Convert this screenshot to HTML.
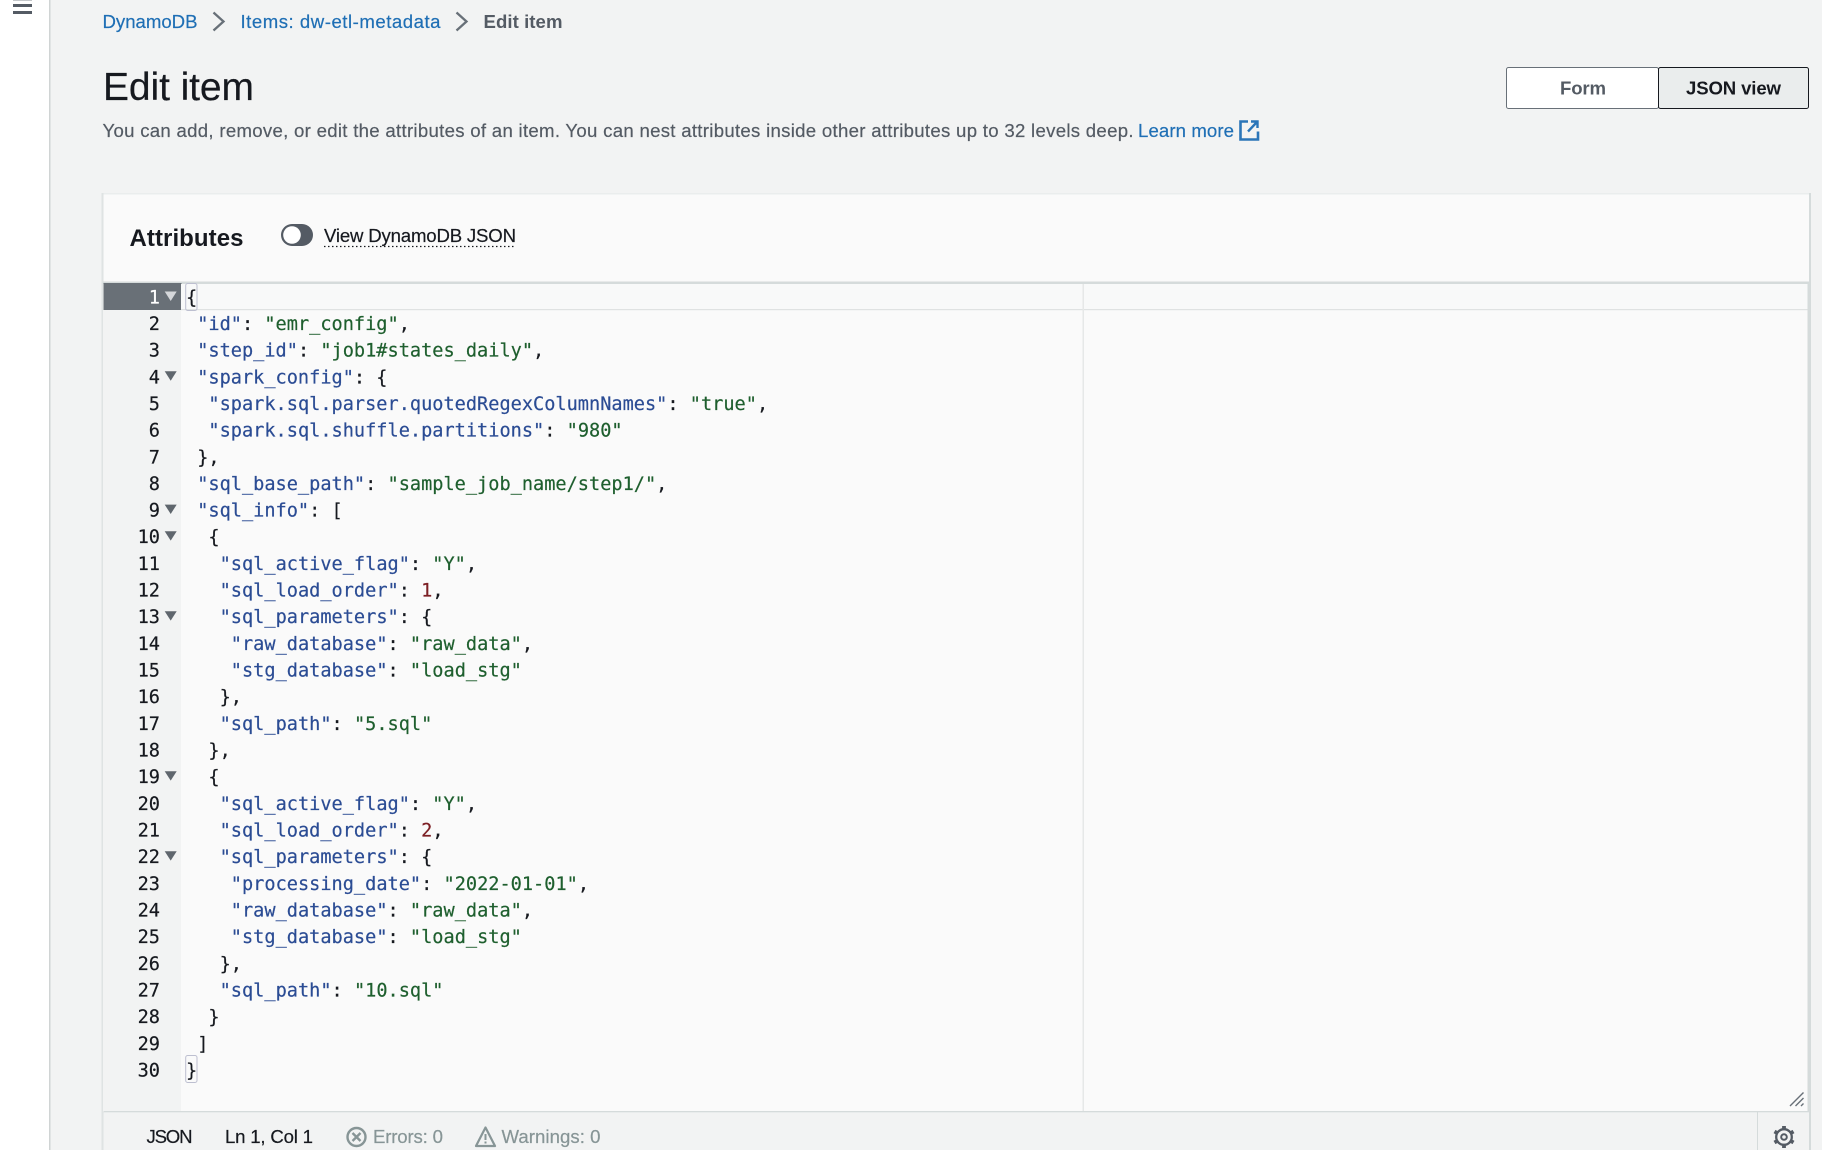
<!DOCTYPE html>
<html lang="en"><head><meta charset="utf-8"><title>Edit item</title>
<style>
html,body{margin:0;padding:0;background:#f2f3f3;width:1822px;height:1150px;overflow:hidden}
svg{display:block;position:absolute;left:0;top:0;filter:blur(.3px)}
text{font-family:"Liberation Sans",sans-serif;white-space:pre;stroke-width:.2px}
.c text{font-family:"DejaVu Sans Mono","Liberation Mono",monospace;font-size:18.6px;fill:#16191f;stroke:#16191f}
.g text{font-family:"DejaVu Sans Mono","Liberation Mono",monospace;font-size:18.6px;fill:#16191f;text-anchor:end;stroke:#16191f}
.c .k{fill:#2b4c94;stroke:#2b4c94}.c .s{fill:#1e5f2e;stroke:#1e5f2e}.c .n{fill:#7c1f24;stroke:#7c1f24}
</style></head><body>
<svg width="1822" height="1150" viewBox="0 0 1822 1150" xmlns="http://www.w3.org/2000/svg">
<rect width="1822" height="1150" fill="#f2f3f3"/>
<!-- sidebar -->
<rect x="0" y="0" width="49" height="1150" fill="#fff"/>
<rect x="49" y="0" width="1.5" height="1150" fill="#d0d4d4"/>
<rect x="13" y="0" width="19" height="1" fill="#c4c7ca"/>
<rect x="13" y="4" width="19" height="3" fill="#545b64"/>
<rect x="13" y="11" width="19" height="3" fill="#545b64"/>
<!-- breadcrumb -->
<text x="102.500" y="28" font-size="18.6" fill="#1f6fb5" stroke="#1f6fb5" textLength="95">DynamoDB</text>
<path d="M213.500 12.500 L223.500 21.500 L213.500 30.500" fill="none" stroke="#687078" stroke-width="2.300"/>
<text x="240.500" y="28" font-size="18.6" fill="#1f6fb5" stroke="#1f6fb5" textLength="200">Items: dw-etl-metadata</text>
<path d="M456.500 12.500 L466.500 21.500 L456.500 30.500" fill="none" stroke="#687078" stroke-width="2.300"/>
<text x="483.500" y="28" font-size="18.6" font-weight="bold" fill="#545b64" textLength="79">Edit item</text>
<!-- title -->
<text x="103" y="100" font-size="39" fill="#16191f" stroke="#16191f" textLength="151">Edit item</text>
<text x="102.500" y="137" font-size="18.6" fill="#545b64" stroke="#545b64" textLength="1031">You can add, remove, or edit the attributes of an item. You can nest attributes inside other attributes up to 32 levels deep.</text>
<text x="1138" y="137" font-size="18.6" fill="#1f6fb5" stroke="#1f6fb5" textLength="96">Learn more</text>
<path d="M1248 121.500 H1240.500 V139.500 H1258 V131.500" fill="none" stroke="#2a75b8" stroke-width="2.600"/>
<path d="M1248 131.500 L1256.500 122.500 M1251 121.500 H1257.500 V128" fill="none" stroke="#2a75b8" stroke-width="2.400"/>
<!-- segmented -->
<rect x="1506.500" y="67.500" width="152" height="41" fill="#fff" stroke="#687078" rx="2"/>
<rect x="1658.500" y="67.500" width="150" height="41" fill="#eaeded" stroke="#16191f" rx="2"/>
<text x="1560" y="94.500" font-size="18.6" font-weight="bold" fill="#545b64" textLength="46">Form</text>
<text x="1686" y="94.500" font-size="18.6" font-weight="bold" fill="#16191f" textLength="95">JSON view</text>
<!-- card -->
<rect x="102.500" y="193" width="1707.500" height="957" fill="#fafafa"/>
<rect x="102" y="193" width="1708" height="1.500" fill="#eaeded"/>
<rect x="101.500" y="193" width="2" height="957" fill="#dfe3e3"/>
<rect x="1809" y="193" width="2" height="957" fill="#d5dbdb"/>
<text x="129.500" y="246" font-size="24" font-weight="bold" fill="#16191f" textLength="114">Attributes</text>
<rect x="281" y="224" width="32" height="22" rx="11" fill="#545b64"/>
<circle cx="292" cy="235" r="8.800" fill="#fff"/>
<text x="324" y="242" font-size="18.6" fill="#16191f" stroke="#16191f" textLength="192">View DynamoDB JSON</text>
<line x1="324" y1="246.500" x2="516" y2="246.500" stroke="#16191f" stroke-width="1.200" stroke-dasharray="1.500 2.500"/>
<!-- editor -->
<rect x="103" y="281.500" width="1706" height="2.500" fill="#d5dbdb"/>
<rect x="103" y="284" width="78" height="828" fill="#f2f3f3"/>
<rect x="103.500" y="283" width="78" height="27" fill="#697077"/>
<rect x="181" y="284" width="1627" height="26" fill="#f8f9f9"/>
<rect x="181" y="309" width="1627" height="1.200" fill="#dfe2e2"/>
<rect x="1082.500" y="284" width="1.500" height="828" fill="#e6e8e8"/>
<rect x="1807.500" y="284" width="1.500" height="828" fill="#d5dbdb"/>
<rect x="185.700" y="283.500" width="11.300" height="27" rx="2" fill="none" stroke="#bdbfd0"/>
<rect x="185.700" y="1055.500" width="11.300" height="27" rx="2" fill="none" stroke="#bdbfd0"/>
<!-- fold arrows -->
<polygon points="164.700,291.500 176.700,291.500 170.700,301" fill="#d5d7da"/>
<g fill="#5f666d">
<polygon points="164.700,371.300 176.700,371.300 170.700,380.700"/>
<polygon points="164.700,504.600 176.700,504.600 170.700,514"/>
<polygon points="164.700,531.200 176.700,531.200 170.700,540.600"/>
<polygon points="164.700,611.200 176.700,611.200 170.700,620.600"/>
<polygon points="164.700,771.200 176.700,771.200 170.700,780.600"/>
<polygon points="164.700,851.200 176.700,851.200 170.700,860.600"/>
</g>
<!-- gutter numbers -->
<g class="g">
<text x="160" y="303.300" style="fill:#fff;stroke:#fff">1</text>
<text x="160" y="330">2</text>
<text x="160" y="356.600">3</text>
<text x="160" y="383.300">4</text>
<text x="160" y="409.900">5</text>
<text x="160" y="436.600">6</text>
<text x="160" y="463.300">7</text>
<text x="160" y="489.900">8</text>
<text x="160" y="516.600">9</text>
<text x="160" y="543.200">10</text>
<text x="160" y="569.900">11</text>
<text x="160" y="596.600">12</text>
<text x="160" y="623.200">13</text>
<text x="160" y="649.900">14</text>
<text x="160" y="676.500">15</text>
<text x="160" y="703.200">16</text>
<text x="160" y="729.900">17</text>
<text x="160" y="756.500">18</text>
<text x="160" y="783.200">19</text>
<text x="160" y="809.800">20</text>
<text x="160" y="836.500">21</text>
<text x="160" y="863.200">22</text>
<text x="160" y="889.800">23</text>
<text x="160" y="916.500">24</text>
<text x="160" y="943.100">25</text>
<text x="160" y="969.800">26</text>
<text x="160" y="996.500">27</text>
<text x="160" y="1023.100">28</text>
<text x="160" y="1049.800">29</text>
<text x="160" y="1076.400">30</text>
</g>
<!-- code -->
<g class="c">
<text x="186" y="303.300">{</text>
<text x="197.200" y="330"><tspan class="k">"id"</tspan>: <tspan class="s">"emr_config"</tspan>,</text>
<text x="197.200" y="356.600"><tspan class="k">"step_id"</tspan>: <tspan class="s">"job1#states_daily"</tspan>,</text>
<text x="197.200" y="383.300"><tspan class="k">"spark_config"</tspan>: {</text>
<text x="208.400" y="409.900"><tspan class="k">"spark.sql.parser.quotedRegexColumnNames"</tspan>: <tspan class="s">"true"</tspan>,</text>
<text x="208.400" y="436.600"><tspan class="k">"spark.sql.shuffle.partitions"</tspan>: <tspan class="s">"980"</tspan></text>
<text x="197.200" y="463.300">},</text>
<text x="197.200" y="489.900"><tspan class="k">"sql_base_path"</tspan>: <tspan class="s">"sample_job_name/step1/"</tspan>,</text>
<text x="197.200" y="516.600"><tspan class="k">"sql_info"</tspan>: [</text>
<text x="208.400" y="543.200">{</text>
<text x="219.600" y="569.900"><tspan class="k">"sql_active_flag"</tspan>: <tspan class="s">"Y"</tspan>,</text>
<text x="219.600" y="596.600"><tspan class="k">"sql_load_order"</tspan>: <tspan class="n">1</tspan>,</text>
<text x="219.600" y="623.200"><tspan class="k">"sql_parameters"</tspan>: {</text>
<text x="230.800" y="649.900"><tspan class="k">"raw_database"</tspan>: <tspan class="s">"raw_data"</tspan>,</text>
<text x="230.800" y="676.500"><tspan class="k">"stg_database"</tspan>: <tspan class="s">"load_stg"</tspan></text>
<text x="219.600" y="703.200">},</text>
<text x="219.600" y="729.900"><tspan class="k">"sql_path"</tspan>: <tspan class="s">"5.sql"</tspan></text>
<text x="208.400" y="756.500">},</text>
<text x="208.400" y="783.200">{</text>
<text x="219.600" y="809.800"><tspan class="k">"sql_active_flag"</tspan>: <tspan class="s">"Y"</tspan>,</text>
<text x="219.600" y="836.500"><tspan class="k">"sql_load_order"</tspan>: <tspan class="n">2</tspan>,</text>
<text x="219.600" y="863.200"><tspan class="k">"sql_parameters"</tspan>: {</text>
<text x="230.800" y="889.800"><tspan class="k">"processing_date"</tspan>: <tspan class="s">"2022-01-01"</tspan>,</text>
<text x="230.800" y="916.500"><tspan class="k">"raw_database"</tspan>: <tspan class="s">"raw_data"</tspan>,</text>
<text x="230.800" y="943.100"><tspan class="k">"stg_database"</tspan>: <tspan class="s">"load_stg"</tspan></text>
<text x="219.600" y="969.800">},</text>
<text x="219.600" y="996.500"><tspan class="k">"sql_path"</tspan>: <tspan class="s">"10.sql"</tspan></text>
<text x="208.400" y="1023.100">}</text>
<text x="197.200" y="1049.800">]</text>
<text x="186" y="1076.400">}</text>
</g>
<!-- resize handle -->
<path d="M1790 1106 L1803.500 1092.500 M1795.500 1106 L1803.500 1098 M1801 1106 L1803.500 1103.500" stroke="#687078" stroke-width="1.400" fill="none"/>
<!-- status bar -->
<rect x="103.500" y="1112" width="1705.500" height="38" fill="#f2f3f3"/>
<rect x="103.500" y="1111" width="1705.500" height="1.300" fill="#d5dbdb"/>
<rect x="1757" y="1112" width="1" height="38" fill="#d5dbdb"/>
<text x="146.500" y="1143" font-size="18.6" fill="#16191f" stroke="#16191f" textLength="46">JSON</text>
<text x="225" y="1143" font-size="18.6" fill="#16191f" stroke="#16191f" textLength="88">Ln 1, Col 1</text>
<circle cx="356.500" cy="1137" r="9" fill="none" stroke="#879596" stroke-width="2.400"/>
<path d="M352.500 1133 L360.500 1141 M360.500 1133 L352.500 1141" stroke="#879596" stroke-width="2.400" fill="none"/>
<text x="373" y="1143" font-size="18.6" fill="#879596" stroke="#879596" textLength="70">Errors: 0</text>
<path d="M485.500 1127.500 L495 1146 H476 Z" fill="none" stroke="#879596" stroke-width="2.200" stroke-linejoin="round"/>
<path d="M485.500 1134 V1140 M485.500 1141.500 V1143.500" stroke="#879596" stroke-width="2"/>
<text x="501.500" y="1143" font-size="18.6" fill="#879596" stroke="#879596" textLength="99">Warnings: 0</text>
<!-- gear -->
<g transform="translate(1784 1137)" fill="none" stroke="#545b64">
<circle r="7.800" stroke-width="2.300"/>
<circle r="2.800" stroke-width="2"/>
<path d="M0 -11 V-8 M0 11 V8 M-9.500 -5.500 L-6.900 -4 M9.500 -5.500 L6.900 -4 M-9.500 5.500 L-6.900 4 M9.500 5.500 L6.900 4" stroke-width="3.800"/>
</g>
</svg>
</body></html>
